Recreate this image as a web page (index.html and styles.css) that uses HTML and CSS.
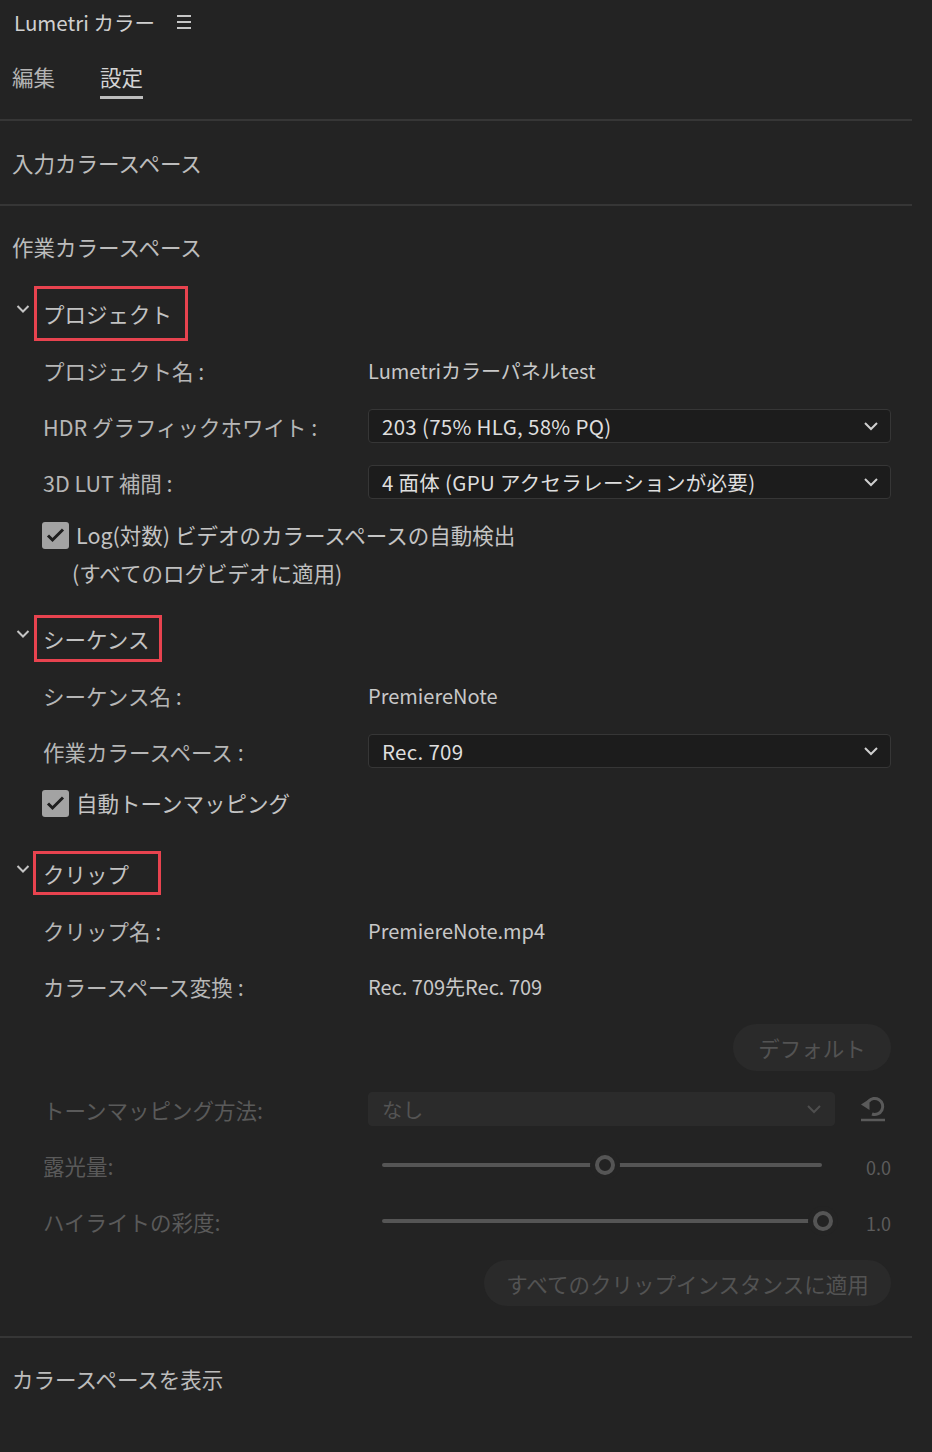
FILE: index.html
```html
<!DOCTYPE html>
<html lang="ja">
<head>
  <meta charset="UTF-8">
  <title>Lumetri カラー</title>
  <link rel="stylesheet" href="styles.css">
</head>
<body>

<div class="panel">
  <div class="title-bar">
    <span class="title">Lumetri カラー</span>
    <svg class="menu-icon" width="16" height="16" viewBox="0 0 16 16">
      <path d="M1 2h14M1 8h14M1 14h14" stroke="#c6c6c6" stroke-width="2"/>
    </svg>
  </div>

  <div class="tabs">
    <div class="tab">編集</div>
    <div class="tab active">設定</div>
  </div>

  <div class="divider"></div>
  <div class="section-input">入力カラースペース</div>
  <div class="divider"></div>

  <div class="section-title">作業カラースペース</div>

  <!-- プロジェクト -->
  <div class="group-head">
    <svg class="chev" width="14" height="10" viewBox="0 0 14 10"><path d="M1.5 2l5.5 5.5L12.5 2" fill="none" stroke="#c4c4c4" stroke-width="2"/></svg>
    <span class="mark mark-project">プロジェクト</span>
  </div>
  <div class="row">
    <span class="label">プロジェクト名 :</span>
    <span class="value">Lumetriカラーパネルtest</span>
  </div>
  <div class="row">
    <span class="label">HDR グラフィックホワイト :</span>
    <div class="select"><span>203 (75% HLG, 58% PQ)</span>
      <svg width="16" height="10" viewBox="0 0 16 10"><path d="M2 2l6 6 6-6" fill="none" stroke="#cfcfcf" stroke-width="2"/></svg>
    </div>
  </div>
  <div class="row">
    <span class="label">3D LUT 補間 :</span>
    <div class="select"><span>4 面体 (GPU アクセラレーションが必要)</span>
      <svg width="16" height="10" viewBox="0 0 16 10"><path d="M2 2l6 6 6-6" fill="none" stroke="#cfcfcf" stroke-width="2"/></svg>
    </div>
  </div>
  <div class="check-block check-project">
    <div class="check-line">
      <span class="checkbox"><svg width="19" height="16" viewBox="0 0 19 16"><path d="M2 8.5l4.5 4.5L17 2.5" fill="none" stroke="#1e1e1e" stroke-width="3"/></svg></span>
      <span>Log(対数) ビデオのカラースペースの自動検出</span>
    </div>
    <div class="check-sub">(すべてのログビデオに適用)</div>
  </div>

  <!-- シーケンス -->
  <div class="group-head">
    <svg class="chev" width="14" height="10" viewBox="0 0 14 10"><path d="M1.5 2l5.5 5.5L12.5 2" fill="none" stroke="#c4c4c4" stroke-width="2"/></svg>
    <span class="mark mark-sequence">シーケンス</span>
  </div>
  <div class="row">
    <span class="label">シーケンス名 :</span>
    <span class="value">PremiereNote</span>
  </div>
  <div class="row">
    <span class="label">作業カラースペース :</span>
    <div class="select"><span>Rec. 709</span>
      <svg width="16" height="10" viewBox="0 0 16 10"><path d="M2 2l6 6 6-6" fill="none" stroke="#cfcfcf" stroke-width="2"/></svg>
    </div>
  </div>
  <div class="check-block check-sequence">
    <div class="check-line">
      <span class="checkbox"><svg width="19" height="16" viewBox="0 0 19 16"><path d="M2 8.5l4.5 4.5L17 2.5" fill="none" stroke="#1e1e1e" stroke-width="3"/></svg></span>
      <span>自動トーンマッピング</span>
    </div>
  </div>

  <!-- クリップ -->
  <div class="group-head">
    <svg class="chev" width="14" height="10" viewBox="0 0 14 10"><path d="M1.5 2l5.5 5.5L12.5 2" fill="none" stroke="#c4c4c4" stroke-width="2"/></svg>
    <span class="mark mark-clip">クリップ</span>
  </div>
  <div class="row">
    <span class="label">クリップ名 :</span>
    <span class="value">PremiereNote.mp4</span>
  </div>
  <div class="row">
    <span class="label">カラースペース変換 :</span>
    <span class="value">Rec. 709先Rec. 709</span>
  </div>

  <div class="btn-row btn-row-default">
    <div class="pill-btn btn-default">デフォルト</div>
  </div>

  <div class="row disabled tone-row">
    <span class="label">トーンマッピング方法:</span>
    <div class="select select-disabled"><span>なし</span>
      <svg width="16" height="10" viewBox="0 0 16 10"><path d="M2 2l6 6 6-6" fill="none" stroke="#4e4e4e" stroke-width="2"/></svg>
    </div>
    <svg class="reset-icon" width="30" height="28" viewBox="0 0 30 28">
      <path d="M10.5 6.5A8 8 0 1 1 14 19" fill="none" stroke="#5a5a5a" stroke-width="3"/>
      <path d="M3 9.5l8.5-5.5v11z" fill="#5a5a5a"/>
      <path d="M3 25h24" stroke="#5a5a5a" stroke-width="2.5"/>
    </svg>
  </div>
  <div class="row disabled">
    <span class="label">露光量:</span>
    <div class="slider">
      <div class="track"></div>
      <span class="thumb" style="left: 223px"></span>
    </div>
    <span class="slider-value">0.0</span>
  </div>
  <div class="row disabled">
    <span class="label">ハイライトの彩度:</span>
    <div class="slider">
      <div class="track"></div>
      <span class="thumb" style="left: 441px"></span>
    </div>
    <span class="slider-value">1.0</span>
  </div>

  <div class="btn-row btn-row-apply">
    <div class="pill-btn btn-apply">すべてのクリップインスタンスに適用</div>
  </div>

  <div class="divider divider-bottom"></div>
  <div class="section-footer">カラースペースを表示</div>
</div>

</body>
</html>
```

FILE: styles.css
```css
body {
  margin: 0;
  background: #232323;
  font-family: "Noto Sans CJK JP", "Noto Sans", sans-serif;
  font-size: 21.5px;
  color: #b6b6b6;
}

.panel {
  width: 912px;
  height: 1452px;
}

.title-bar {
  height: 44px;
  display: flex;
  align-items: center;
  padding-left: 14px;
}

.title {
  font-size: 20.5px;
  color: #d0d0d0;
}

.menu-icon {
  margin-left: 21px;
}

.tabs {
  height: 75px;
  display: flex;
  gap: 45px;
  padding-left: 12px;
}

.tab {
  padding-top: 18px;
  line-height: 30px;
  color: #b4b4b4;
}

.tab.active {
  color: #d4d4d4;
}

.tab.active::after {
  content: "";
  display: block;
  height: 3px;
  margin-top: 4px;
  background: #bdbdbd;
}

.divider {
  height: 2px;
  background: #363636;
}

.section-input {
  height: 83px;
  line-height: 83px;
  padding-left: 12px;
  color: #bcbcbc;
}

.section-title {
  padding: 26px 0 22px 12px;
  line-height: 30px;
  color: #bcbcbc;
}

.group-head {
  height: 58px;
  display: flex;
  align-items: center;
  padding-left: 16px;
}

.chev {
  margin-top: -8px;
  margin-right: 4px;
}

.mark {
  box-sizing: border-box;
  display: flex;
  align-items: center;
  border: 3px solid #e8434f;
  padding-left: 6px;
  color: #c2c2c2;
}

.mark-project { width: 154px; height: 55px; }
.mark-sequence { width: 128px; height: 47px; }
.mark-clip { width: 128px; height: 44px; margin-left: -1px; padding-left: 7px; }

.row {
  height: 56px;
  display: flex;
  align-items: center;
  padding-left: 43px;
}

.label {
  width: 325px;
  flex-shrink: 0;
  color: #b6b6b6;
}

.value {
  color: #c8c8c8;
  font-size: 20px;
}

.select {
  box-sizing: border-box;
  width: 523px;
  height: 34px;
  display: flex;
  align-items: center;
  justify-content: space-between;
  padding: 0 11px 0 13px;
  background: #1c1c1c;
  border: 1px solid #363636;
  border-radius: 4px;
  color: #dedede;
  font-size: 20.5px;
  letter-spacing: 0.3px;
}

.check-block {
  padding-left: 42px;
}

.check-project {
  padding-top: 6px;
  margin-bottom: 17px;
}

.check-sequence {
  padding-top: 5px;
  margin-bottom: 22px;
}

.check-line {
  display: flex;
  align-items: center;
  gap: 7px;
  line-height: 38px;
  color: #c4c4c4;
}

.checkbox {
  width: 27px;
  height: 27px;
  border-radius: 3px;
  background: #a3a3a3;
  display: flex;
  align-items: center;
  justify-content: center;
}

.check-sub {
  padding-left: 30px;
  line-height: 38px;
  color: #c0c0c0;
}

.btn-row {
  display: flex;
  justify-content: flex-end;
  padding-right: 21px;
}

.btn-row-default {
  margin-top: 10px;
}

.btn-row-apply {
  margin-top: 11px;
}

.pill-btn {
  display: flex;
  align-items: center;
  justify-content: center;
  background: #2a2a2a;
  color: #535353;
  border-radius: 24px;
}

.btn-default {
  width: 158px;
  height: 47px;
}

.btn-apply {
  width: 407px;
  height: 46px;
}

.tone-row {
  margin-top: 10px;
}

.disabled .label {
  color: #5a5a5a;
}

.select-disabled {
  width: 467px;
  background: #2b2b2b;
  border-color: #2b2b2b;
  color: #545454;
  padding-right: 12px;
}

.reset-icon {
  margin-left: 23px;
}

.slider {
  position: relative;
  width: 440px;
  height: 20px;
  margin-left: 14px;
  display: flex;
  align-items: center;
}

.track {
  width: 100%;
  height: 4px;
  background: #555;
  border-radius: 2px;
}

.thumb {
  position: absolute;
  top: 0;
  margin-left: -10px;
  box-sizing: border-box;
  width: 20px;
  height: 20px;
  border-radius: 50%;
  border: 4px solid #555;
  background: #232323;
  box-shadow: 0 0 0 5px #232323;
}

.slider-value {
  margin-left: auto;
  margin-right: 21px;
  font-size: 18px;
  color: #5c5c5c;
  padding-top: 4px;
}

.divider-bottom {
  margin-top: 30px;
}

.section-footer {
  padding: 26px 0 0 12px;
  line-height: 30px;
  color: #bcbcbc;
}
```
